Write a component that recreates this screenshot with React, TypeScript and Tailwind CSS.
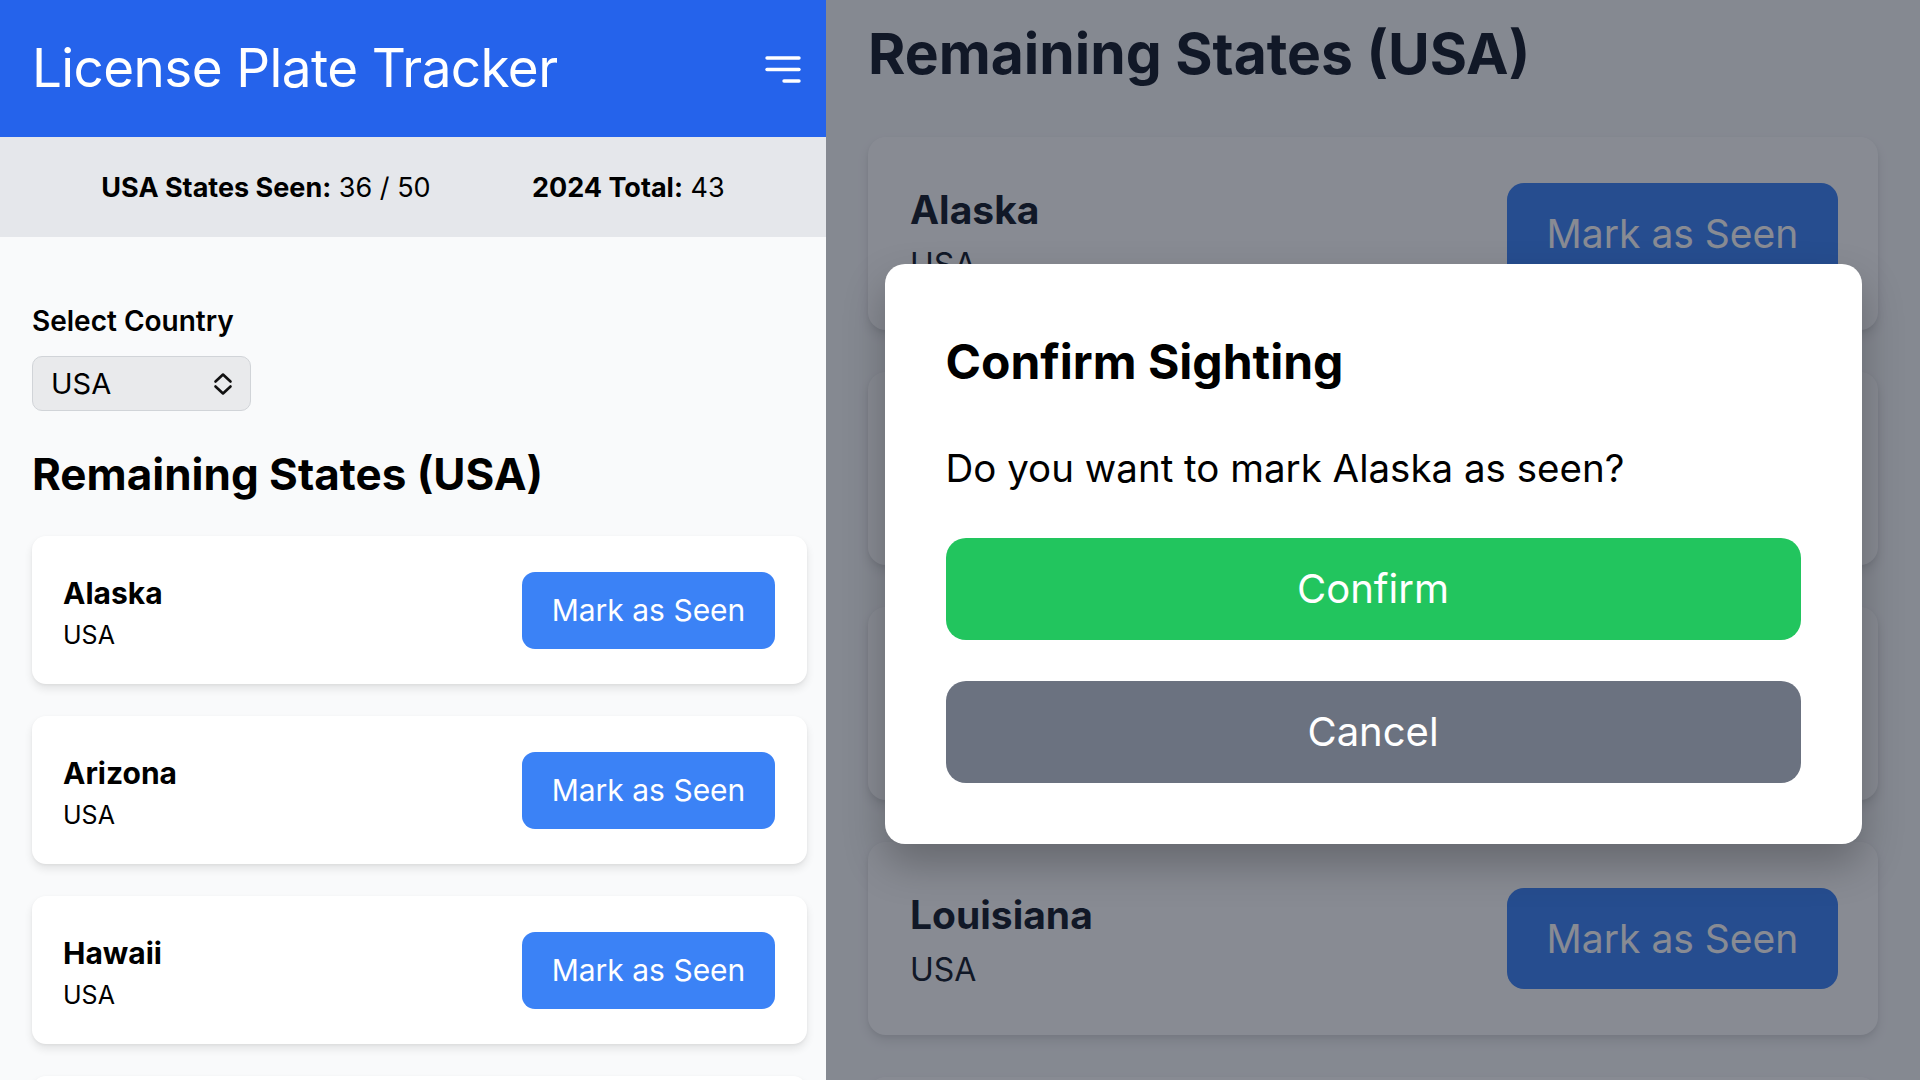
import React from "react";

const leftStates = ["Alaska", "Arizona", "Hawaii", "Idaho"];
const rightStates = ["Alaska", "Arkansas", "Iowa", "Louisiana", "Maine"];

function Hamburger() {
  return (
    <svg width="40" height="30" viewBox="0 0 40 30" fill="none" stroke="white" strokeWidth="3.4" strokeLinecap="round">
      <line x1="4" y1="4" x2="36" y2="4" />
      <line x1="4" y1="15.5" x2="36" y2="15.5" />
      <line x1="21" y1="27" x2="36" y2="27" />
    </svg>
  );
}

function UpDown() {
  return (
    <svg width="20" height="24" viewBox="0 0 20 24" fill="none" stroke="#111" strokeWidth="2.6" strokeLinecap="round" strokeLinejoin="round">
      <polyline points="2.5,9.5 10,2.5 17.5,9.5" />
      <polyline points="2.5,14.5 10,21.5 17.5,14.5" />
    </svg>
  );
}

function LeftCard({ name }: { name: string }) {
  return (
    <div className="h-[148px] shrink-0 bg-white rounded-[14px] shadow-[0_5px_9px_rgba(0,0,0,0.09),0_1px_3px_rgba(0,0,0,0.05)] flex items-center justify-between pl-[31px] pr-[32px]">
      <div className="flex flex-col pt-[5px]">
        <span className="text-[30px] leading-[42px] font-bold text-black">{name}</span>
        <span className="mt-[2px] text-[25px] leading-[38px] text-black">USA</span>
      </div>
      <button className="w-[253px] h-[77px] rounded-[13px] bg-[#3b82f6] text-white text-[30px] leading-none">
        Mark as Seen
      </button>
    </div>
  );
}

function RightCard({ name }: { name: string }) {
  return (
    <div className="h-[193px] shrink-0 bg-white rounded-[18px] shadow-[0_6px_12px_rgba(0,0,0,0.10),0_2px_4px_rgba(0,0,0,0.05)] flex items-center justify-between pl-[42px] pr-[40px]">
      <div className="flex flex-col pt-[4px]">
        <span className="text-[39px] leading-[55px] font-bold text-[#111827]">{name}</span>
        <span className="mt-[3px] text-[32px] leading-[50px] text-[#111827]">USA</span>
      </div>
      <button className="w-[331px] h-[101px] rounded-[17px] bg-[#3b82f6] text-white text-[39px] leading-none">
        Mark as Seen
      </button>
    </div>
  );
}

export default function App() {
  return (
    <div className="flex w-[1920px] h-[1080px] overflow-hidden font-['Inter','Noto_Sans',sans-serif]">
      {/* Left panel */}
      <div className="w-[826px] shrink-0 h-full bg-[#f9fafb] flex flex-col overflow-hidden">
        <header className="h-[137px] shrink-0 bg-[#2563eb] flex items-center justify-between pl-[32px] pr-[23px]">
          <h1 className="text-white text-[53px] leading-none font-normal tracking-[-0.6px]">License Plate Tracker</h1>
          <Hamburger />
        </header>
        <div className="h-[100px] shrink-0 bg-[#e5e7eb] flex items-center justify-evenly text-[27px] leading-none text-black">
          <p>
            <span className="font-bold">USA States Seen:</span> 36 / 50
          </p>
          <p>
            <span className="font-bold">2024 Total:</span> 43
          </p>
        </div>
        <main className="pl-[32px] pr-[19px] pt-[66px] flex flex-col">
          <label className="block text-[28px] leading-[36px] font-semibold text-black">Select Country</label>
          <div className="mt-[17px] w-[219px] h-[55px] rounded-[10px] bg-[#e9eaec] border-[1.5px] border-[#d1d4d8] flex items-center justify-between pl-[18px] pr-[17px]">
            <span className="text-[29px] leading-none text-black">USA</span>
            <UpDown />
          </div>
          <h2 className="mt-[36px] text-[44px] leading-[54px] font-bold text-black">Remaining States (USA)</h2>
          <div className="mt-[35px] flex flex-col gap-[32px]">
            {leftStates.map((s) => (
              <LeftCard key={s} name={s} />
            ))}
          </div>
        </main>
      </div>

      {/* Right panel */}
      <div className="relative flex-1 h-full bg-[#f9fafb] overflow-hidden">
        <div className="px-[42px] flex flex-col">
          <h2 className="pt-[18px] text-[57px] leading-[72px] font-bold text-[#111827]">Remaining States (USA)</h2>
          <div className="mt-[47px] flex flex-col gap-[42px]">
            {rightStates.map((s) => (
              <RightCard key={s} name={s} />
            ))}
          </div>
        </div>

        <div className="absolute inset-0 bg-[#111827]/50 flex justify-center items-start pt-[264px]">
          <div className="w-[977px] h-[580px] bg-white rounded-[20px] shadow-[0_20px_40px_rgba(0,0,0,0.25)] px-[61px] pt-[66px] flex flex-col">
            <h3 className="text-[48px] leading-[64px] font-bold text-black">Confirm Sighting</h3>
            <p className="mt-[50px] text-[38.5px] leading-[48px] text-black">Do you want to mark Alaska as seen?</p>
            <button className="mt-[46px] h-[102px] w-full rounded-[20px] bg-[#22c55e] text-white text-[40px] leading-none">
              Confirm
            </button>
            <button className="mt-[41px] h-[102px] w-full rounded-[20px] bg-[#6b7280] text-white text-[40px] leading-none">
              Cancel
            </button>
          </div>
        </div>
      </div>
    </div>
  );
}
